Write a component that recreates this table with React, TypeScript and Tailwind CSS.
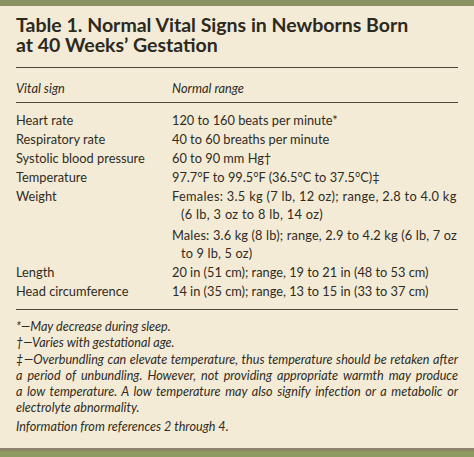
import React from "react";

const LABEL_W = "w-[156px] shrink-0";

const rows: { label: string; value: string }[] = [
  { label: "Heart rate", value: "120 to 160 beats per minute*" },
  { label: "Respiratory rate", value: "40 to 60 breaths per minute" },
  { label: "Systolic blood pressure", value: "60 to 90 mm Hg†" },
  { label: "Temperature", value: "97.7°F to 99.5°F (36.5°C to 37.5°C)‡" },
];

export default function App() {
  return (
    <div
      className="w-[474px] h-[457px] bg-[#f4ebd7] flex flex-col text-[#2f2b22] overflow-hidden"
      style={{ fontFamily: 'Lato, "Open Sans", sans-serif' }}
    >
      <div className="h-[6px] bg-[#899162] shrink-0" />
      <div className="px-4 flex flex-col">
        <h1 className="mt-[9px] text-[19.5px] leading-[20px] font-bold text-[#2b2920] whitespace-nowrap">
          Table 1. Normal Vital Signs in Newborns Born
          <br />
          at 40 Weeks’ Gestation
        </h1>
        <div className="mt-[12px] border-t border-[#4d4737]" />
        <div className="flex italic text-[12.8px] leading-[18px] pt-[11px] pb-[5px]">
          <div className={LABEL_W}>Vital sign</div>
          <div>Normal range</div>
        </div>
        <div className="border-t border-[#4d4737]" />
        <div className="flex flex-col gap-[1px] text-[12.8px] leading-[18px] pt-[8px] pb-[9px] whitespace-nowrap">
          {rows.map((r) => (
            <div key={r.label} className="flex">
              <div className={LABEL_W}>{r.label}</div>
              <div>{r.value}</div>
            </div>
          ))}
          <div className="flex">
            <div className={LABEL_W}>Weight</div>
            <div className="flex flex-col gap-[3px]">
              <div className="tracking-[0.3px]">
                <div>Females: 3.5 kg (7 lb, 12 oz); range, 2.8 to 4.0 kg</div>
                <div className="pl-[9px]">(6 lb, 3 oz to 8 lb, 14 oz)</div>
              </div>
              <div className="tracking-[0.15px]">
                <div>Males: 3.6 kg (8 lb); range, 2.9 to 4.2 kg (6 lb, 7 oz</div>
                <div className="pl-[9px]">to 9 lb, 5 oz)</div>
              </div>
            </div>
          </div>
          <div className="flex">
            <div className={LABEL_W}>Length</div>
            <div>20 in (51 cm); range, 19 to 21 in (48 to 53 cm)</div>
          </div>
          <div className="flex">
            <div className={LABEL_W}>Head circumference</div>
            <div>14 in (35 cm); range, 13 to 15 in (33 to 37 cm)</div>
          </div>
        </div>
        <div className="border-t border-[#4d4737]" />
        <div className="italic text-[12.6px] leading-[16.3px] pt-[9px] flex flex-col">
          <p>*—May decrease during sleep.</p>
          <p>†—Varies with gestational age.</p>
          <p className="text-justify">
            ‡—Overbundling can elevate temperature, thus temperature should be retaken after a{"\u00a0"}period of
            unbundling. However, not providing appropriate warmth may produce a{"\u00a0"}low temperature. A low
            temperature may also signify infection or a metabolic or electrolyte abnormality.
          </p>
          <p className="mt-[2px]">Information from references 2 through 4.</p>
        </div>
      </div>
      <div className="mt-auto shrink-0">
        <div className="h-[3px] bg-[#8a846d]" />
        <div className="h-[6px] bg-[#8d9a60]" />
      </div>
    </div>
  );
}
